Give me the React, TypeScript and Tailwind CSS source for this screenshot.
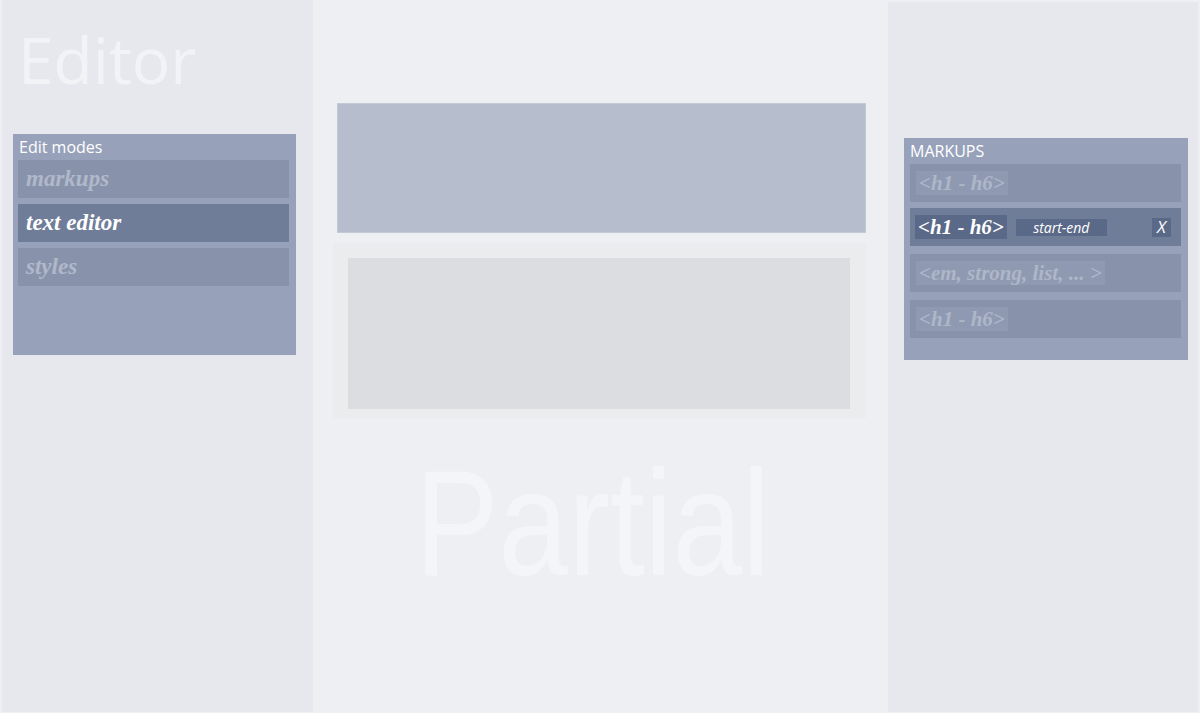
const serif = 'font-["Liberation_Serif",serif]';

const MODES = [
  { label: 'markups', active: false },
  { label: 'text editor', active: true },
  { label: 'styles', active: false },
];

function Tag({ children, active }: { children: React.ReactNode; active?: boolean }) {
  return (
    <span
      className={`inline-flex items-center h-[24px] px-[3px] font-['Liberation_Serif',serif] italic font-bold text-[21px] leading-none ${
        active ? 'bg-[#5b6988] text-white' : 'bg-[#8f9ab2] text-[#aeb6c9]'
      }`}
    >
      {children}
    </span>
  );
}

export default function App() {
  return (
    <div className="flex w-[1200px] h-[713px] bg-[#eeeff3] font-['Open_Sans',sans-serif] overflow-hidden">
      {/* left: editor */}
      <aside className="ml-[2px] w-[311px] h-[712px] bg-[#e7e8ed] flex flex-col">
        <h1 className="mt-[20px] ml-[16px] text-[64px] leading-[80px] font-normal text-[#f2f3f6]">Editor</h1>
        <div className="mt-[34px] ml-[11px] w-[283px] h-[221px] bg-[#97a2ba] pt-[3px]">
          <div className="pl-[6px] text-[16px] leading-[20px] text-white">Edit modes</div>
          <div className="mt-[3px] flex flex-col gap-[6px] pl-[5px]">
            {MODES.map((m) => (
              <div
                key={m.label}
                className={`w-[271px] h-[38px] flex items-center pl-[8px] ${serif} italic font-bold text-[23px] ${
                  m.active ? 'bg-[#6f7d99] text-white' : 'bg-[#8893ab] text-[#b0b8cb]'
                }`}
              >
                {m.label}
              </div>
            ))}
          </div>
        </div>
      </aside>

      {/* middle: partial */}
      <main className="flex-1 flex flex-col items-start pl-[20px]">
        <div className="mt-[103px] ml-[4px] w-[529px] h-[130px] bg-[#b6bdcd] border border-[#c3c9d6]" />
        <div className="mt-[10px] w-[533px] h-[175px] bg-[#ebecee] p-[15px]">
          <div className="w-[502px] h-[151px] bg-[#dcdde0]" />
        </div>
        <div className="mt-[30px] ml-[82px] origin-left scale-x-[0.835] font-['Liberation_Sans',sans-serif] text-[150px] leading-[150px] text-[#f4f5f8]">
          Partial
        </div>
      </main>

      {/* right: markups */}
      <aside className="mt-[2px] mr-[2px] w-[310px] h-[710px] bg-[#e7e8ed] pt-[136px] pl-[16px]">
        <div className="w-[284px] h-[222px] bg-[#97a2ba] pt-[3px]">
          <div className="pl-[6px] text-[16px] leading-[20px] text-white">MARKUPS</div>
          <div className="mt-[3px] flex flex-col pl-[6px]">
            <div className="w-[271px] h-[38px] bg-[#8893ab] flex items-center pl-[6px]">
              <Tag>&lt;h1 - h6&gt;</Tag>
            </div>
            <div className="mt-[6px] w-[271px] h-[38px] bg-[#6f7d99] flex items-center pl-[5px] pr-[10px]">
              <Tag active>&lt;h1 - h6&gt;</Tag>
              <span className="ml-[9px] w-[91px] h-[17px] bg-[#5b6988] flex items-center justify-center text-white italic text-[14px] font-['Open_Sans',sans-serif]">
                start-end
              </span>
              <span className="ml-auto w-[19px] h-[19px] bg-[#5b6988] flex items-center justify-center text-white italic text-[17px] font-['Open_Sans',sans-serif]">
                X
              </span>
            </div>
            <div className="mt-[8px] w-[271px] h-[38px] bg-[#8893ab] flex items-center pl-[6px]">
              <Tag>&lt;em, strong, list, ... &gt;</Tag>
            </div>
            <div className="mt-[8px] w-[271px] h-[38px] bg-[#8893ab] flex items-center pl-[6px]">
              <Tag>&lt;h1 - h6&gt;</Tag>
            </div>
          </div>
        </div>
      </aside>
    </div>
  );
}
